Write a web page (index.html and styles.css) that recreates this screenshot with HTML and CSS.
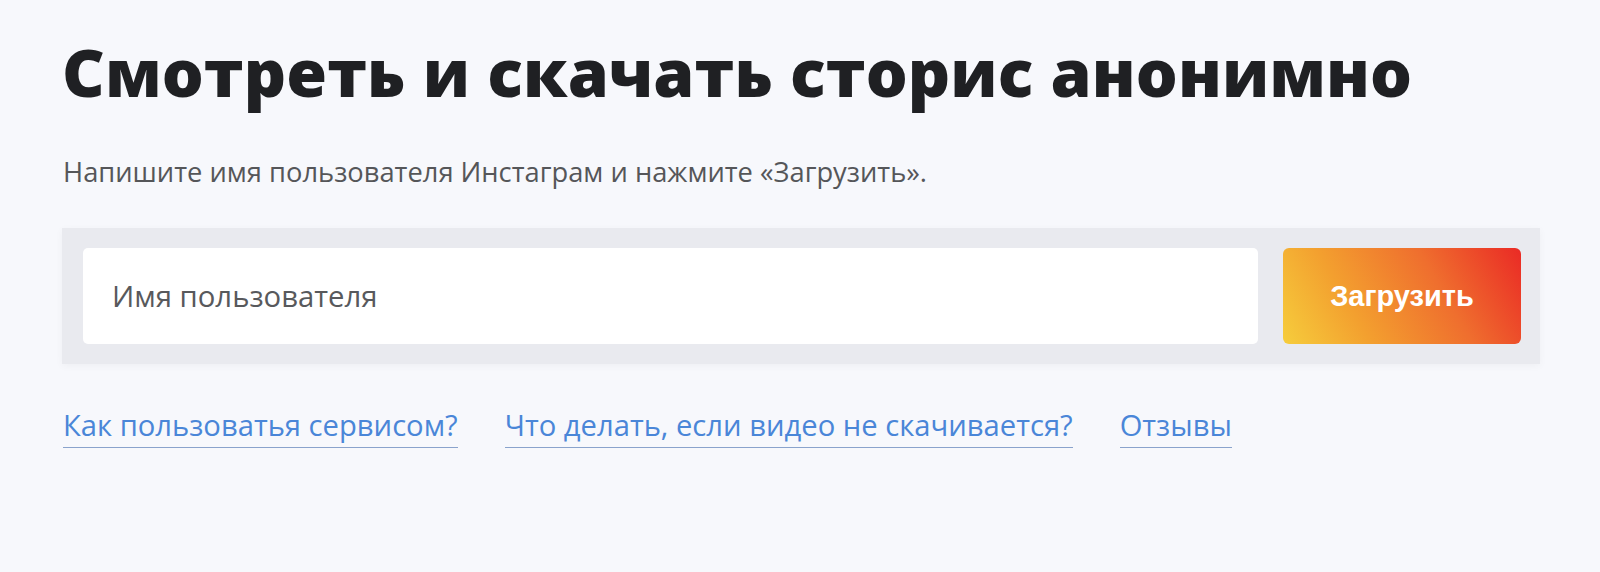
FILE: index.html
```html
<!DOCTYPE html>
<html lang="ru">
<head>
<meta charset="utf-8">
<link rel="stylesheet" href="styles.css">
</head>
<body>
<main class="page">
  <h1 class="title">Смотреть и скачать сторис анонимно</h1>
  <p class="lead">Напишите имя пользователя Инстаграм и нажмите «Загрузить».</p>
  <form class="search">
    <input class="search-input" type="text" placeholder="Имя пользователя">
    <button class="search-btn" type="button">Загрузить</button>
  </form>
  <nav class="links">
    <a href="#" class="link">Как пользоватья сервисом?</a>
    <a href="#" class="link">Что делать, если видео не скачивается?</a>
    <a href="#" class="link">Отзывы</a>
  </nav>
</main>
</body>
</html>
```
FILE: styles.css
```css
html, body {
  margin: 0;
  padding: 0;
  background: #f7f8fc;
}
body {
  font-family: "Open Sans", "Noto Sans", sans-serif;
  color: #1e1f22;
}
.page {
  padding: 31px 60px 0 62px;
  width: 1478px;
}
.title {
  margin: 0;
  font-size: 66px;
  font-weight: 800;
  line-height: 80px;
  letter-spacing: 0.1px;
  color: #1f2023;
}
.lead {
  margin: 43px 0 0 1px;
  font-size: 27.3px;
  line-height: 36px;
  color: #555659;
}
.search {
  margin-top: 38px;
  display: flex;
  gap: 25px;
  padding: 20px 19px 20px 21px;
  background: #e9eaef;
  box-shadow: 0 2px 8px rgba(0, 0, 0, 0.04);
}
.search-input {
  flex: 1;
  height: 96px;
  box-sizing: border-box;
  border: none;
  border-radius: 5px;
  background: #fff;
  padding: 0 29px;
  font-family: "Open Sans", "Noto Sans", sans-serif;
  font-size: 29.3px;
  color: #333;
  outline: none;
}
.search-input::placeholder {
  color: #58595c;
}
.search-btn {
  width: 238px;
  height: 96px;
  border: none;
  border-radius: 6px;
  background: linear-gradient(60deg, #f6cd3c 0%, #f3a02f 30%, #ef6e2e 65%, #ea2a25 100%);
  color: #fff;
  font-family: "Liberation Sans", Arial, sans-serif;
  font-weight: 700;
  font-size: 29px;
  cursor: pointer;
}
.links {
  margin-top: 43px;
  display: flex;
  gap: 47px;
  padding-left: 1px;
}
.link {
  font-size: 29.2px;
  line-height: 36px;
  color: #4a86d8;
  text-decoration: none;
  border-bottom: 1px solid #8aa3cc;
  padding-bottom: 4px;
}
```
